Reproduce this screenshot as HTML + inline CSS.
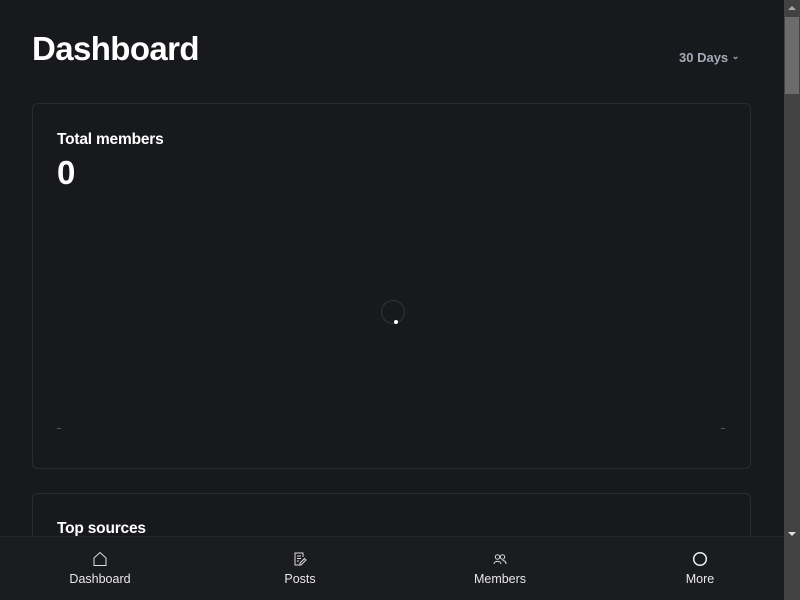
<!DOCTYPE html>
<html><head><style>
*{margin:0;padding:0;box-sizing:border-box}
body{width:800px;height:600px;overflow:hidden;background:#18191c;font-family:"Liberation Sans",sans-serif;color:#fff;position:relative}
h1{position:absolute;left:32px;top:30px;font-size:33px;font-weight:700;letter-spacing:-0.6px}
.days{position:absolute;left:679px;top:50px;font-size:13px;font-weight:700;color:#a3acb7}
.card{position:absolute;left:32px;width:719px;border:1px solid #2a2c30;border-radius:6px}
.c1{top:103px;height:366px}
.c2{top:493px;height:80px}
.lbl{position:absolute;left:24px;font-size:15.5px;font-weight:700;letter-spacing:-0.2px}
.num{position:absolute;left:24px;top:50px;font-size:33px;font-weight:700}
.spin{position:absolute;left:381px;top:300px;width:24px;height:24px;border:1px solid #333539;border-radius:50%}
.dot{position:absolute;left:394px;top:320px;width:4px;height:4px;background:#fff;border-radius:50%}
.dash{position:absolute;top:428px;width:4px;height:1px;background:#555}
.nav{position:absolute;left:0;top:536px;width:784px;height:64px;background:#1b1c1f;border-top:1px solid #25272b}
.it{position:absolute;top:14px;width:100px;text-align:center;font-size:12.5px;color:#e8e8e8}
.it svg{display:block;margin:0 auto 5px}
.sb{position:absolute;right:0;top:0;width:16px;height:600px;background:#424242}
.th{position:absolute;right:1px;top:17px;width:14px;height:77px;background:#6b6b6b}
</style></head><body>
<h1>Dashboard</h1>
<div class="days">30 Days <span style="font-size:9px;position:relative;top:-3px">&#8964;</span></div>
<div class="card c1"><div class="lbl" style="top:27px">Total members</div><div class="num">0</div></div>
<div class="spin"></div><div class="dot"></div>
<div class="dash" style="left:57px"></div><div class="dash" style="left:721px"></div>
<div class="card c2"><div class="lbl" style="top:26px">Top sources</div></div>
<div class="nav">
<div class="it" style="left:50px"><svg width="16" height="16" viewBox="0 0 16 16" fill="none" stroke="#ddd" stroke-width="1"><path d="M2 7L8 1.5L14 7V14.5H2Z"/></svg>Dashboard</div>
<div class="it" style="left:250px"><svg width="16" height="16" viewBox="0 0 16 16" fill="none" stroke="#ddd" stroke-width="1"><path d="M11 6V2H3V14H8M5 5H9M5 7.5H9M5 10H7M9 14L14 9L12.5 7.5L8 12V14Z"/></svg>Posts</div>
<div class="it" style="left:450px"><svg width="16" height="16" viewBox="0 0 16 16" fill="none" stroke="#ddd" stroke-width="1"><circle cx="5.5" cy="6" r="2.2"/><path d="M2 13C2 9.5 9 9.5 9 13"/><circle cx="10.5" cy="6" r="2.2"/><path d="M10.5 9.5C13 9.5 14 11 14 13"/></svg>Members</div>
<div class="it" style="left:650px"><svg width="16" height="16" viewBox="0 0 16 16" fill="none" stroke="#eee" stroke-width="1.5"><circle cx="8" cy="8" r="6.3"/></svg>More</div>
</div>
<div class="sb"><div class="th"></div>
<div style="position:absolute;left:4px;top:6px;border:4px solid transparent;border-bottom:4px solid #aaa;border-top:0;width:0"></div>
<div style="position:absolute;left:4px;top:532px;border:4px solid transparent;border-top:4px solid #ddd;border-bottom:0;width:0"></div>
</div>
</body></html>
